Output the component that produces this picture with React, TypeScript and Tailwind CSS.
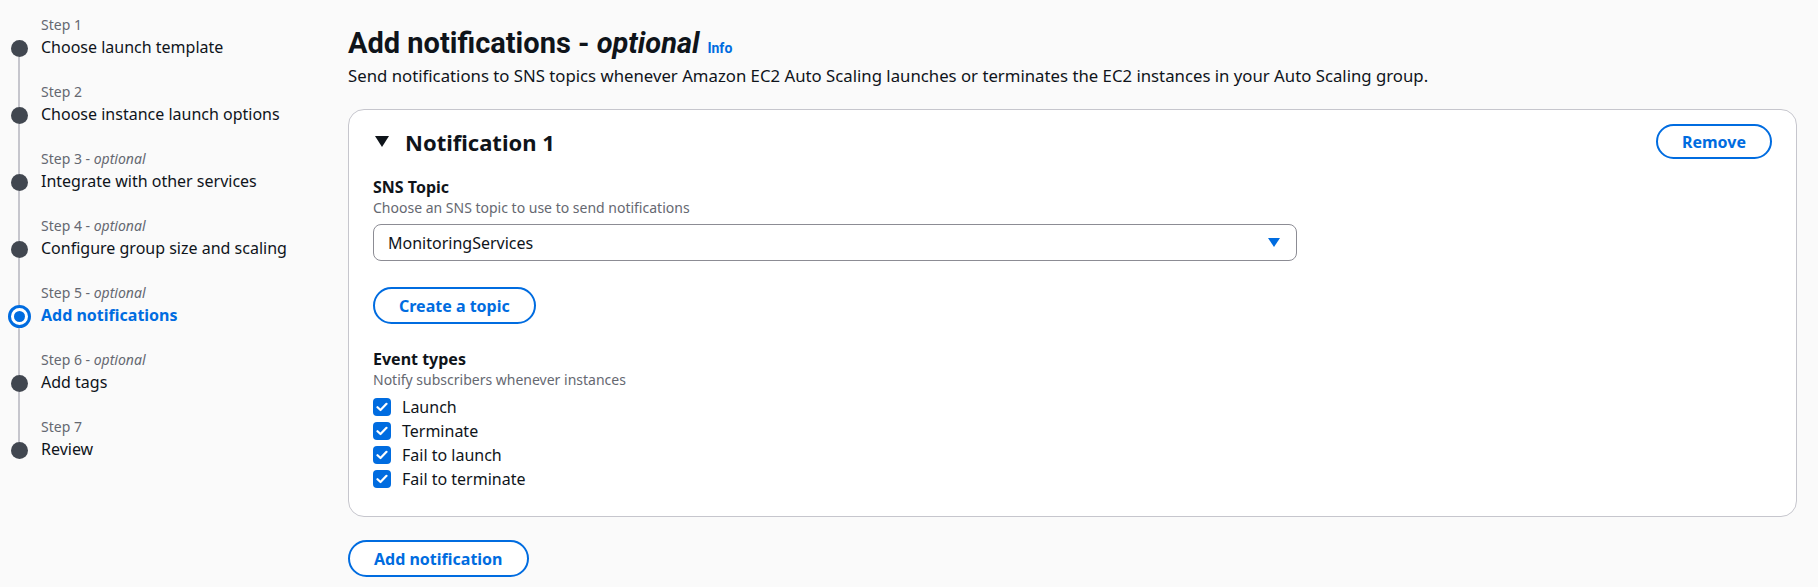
import React from "react";

type Step = {
  n: string;
  label: string;
  optional?: boolean;
  active?: boolean;
};

const STEPS: Step[] = [
  { n: "Step 1", label: "Choose launch template" },
  { n: "Step 2", label: "Choose instance launch options" },
  { n: "Step 3", label: "Integrate with other services", optional: true },
  { n: "Step 4", label: "Configure group size and scaling", optional: true },
  { n: "Step 5", label: "Add notifications", optional: true, active: true },
  { n: "Step 6", label: "Add tags", optional: true },
  { n: "Step 7", label: "Review" },
];

const EVENTS = ["Launch", "Terminate", "Fail to launch", "Fail to terminate"];

function StepItem({ step, first, last }: { step: Step; first: boolean; last: boolean }) {
  return (
    <li className="flex gap-[11px]">
      <div className="flex w-[22px] flex-col items-center">
        <div
          className={`w-[2px] ${step.active ? "h-[23px]" : "h-[26px]"} ${
            first ? "bg-transparent" : "bg-[#c6c6cd]"
          }`}
        />
        {step.active ? (
          <div className="flex h-[23px] w-[23px] items-center justify-center rounded-full border-[3px] border-[#006ce0] bg-white">
            <div className="h-[11px] w-[11px] rounded-full bg-[#006ce0]" />
          </div>
        ) : (
          <div className="h-[17px] w-[17px] rounded-full bg-[#414750]" />
        )}
        <div className={`w-[2px] flex-1 ${last ? "bg-transparent" : "bg-[#c6c6cd]"}`} />
      </div>
      <div className="pb-[22px]">
        <div className="text-[14px] leading-[21px] text-[#656871]">
          {step.n}
          {step.optional && (
            <>
              {" - "}
              <i>optional</i>
            </>
          )}
        </div>
        <div
          className={`text-[16px] leading-[24px] ${
            step.active ? "font-bold text-[#006ce0]" : "text-[#0f141a]"
          }`}
        >
          {step.label}
        </div>
      </div>
    </li>
  );
}

function OutlineButton({ children, h = "h-[37px]" }: { children: React.ReactNode; h?: string }) {
  return (
    <button
      className={`inline-flex ${h} items-center rounded-full border-2 border-[#006ce0] bg-white px-[24px] text-[16px] font-bold text-[#006ce0]`}
    >
      {children}
    </button>
  );
}

function Checkbox({ label }: { label: string }) {
  return (
    <label className="flex h-[24px] items-center gap-[11px]">
      <span className="flex h-[18px] w-[18px] items-center justify-center rounded-[4px] bg-[#006ce0]">
        <svg width="12" height="10" viewBox="0 0 12 10" fill="none">
          <path
            d="M1.5 5.2 L4.5 8 L10.5 1.8"
            stroke="white"
            strokeWidth="2.2"
            strokeLinecap="round"
            strokeLinejoin="round"
          />
        </svg>
      </span>
      <span className="text-[16px] leading-[24px] text-[#0f141a]">{label}</span>
    </label>
  );
}

export default function App() {
  return (
    <div
      className="flex min-h-[587px] bg-[#fafafa] text-[#0f141a]"
      style={{ fontFamily: '"Noto Sans", "Open Sans", sans-serif' }}
    >
      <nav className="w-[348px] shrink-0 pl-[8px] pt-[14px]">
        <ol>
          {STEPS.map((s, i) => (
            <StepItem key={s.n} step={s} first={i === 0} last={i === STEPS.length - 1} />
          ))}
        </ol>
      </nav>

      <main className="flex-1 pr-[21px] pt-[25px]">
        <div className="flex items-baseline gap-[8px]">
          <h1
            className="text-[29px] font-bold leading-[36px] text-[#0f141a]"
            style={{ fontFamily: "Roboto, sans-serif" }}
          >
            Add notifications - <i>optional</i>
          </h1>
          <span
            className="text-[14px] font-bold text-[#006ce0]"
            style={{ fontFamily: "Roboto, sans-serif" }}
          >
            Info
          </span>
        </div>
        <p className="mt-[3px] text-[16.75px] leading-[24px] text-[#0f141a]">
          Send notifications to SNS topics whenever Amazon EC2 Auto Scaling launches or terminates the EC2
          instances in your Auto Scaling group.
        </p>

        <section className="mt-[21px] rounded-[16px] border border-[#c6c6cd] bg-white px-[24px] pb-[25px] pt-[14px]">
          <div className="flex items-center justify-between">
            <div className="flex items-center gap-[16px]">
              <svg width="14" height="11" viewBox="0 0 14 11" className="ml-[2px]">
                <path d="M0 0 H14 L7 11 Z" fill="#0f141a" />
              </svg>
              <h2 className="text-[22px] font-bold leading-[28px]">Notification 1</h2>
            </div>
            <OutlineButton h="h-[35px]">Remove</OutlineButton>
          </div>

          <div className="mt-[17px]">
            <div className="text-[16px] font-bold leading-[22px]">SNS Topic</div>
            <div className="text-[14px] leading-[20px] text-[#656871]">
              Choose an SNS topic to use to send notifications
            </div>
            <div className="mt-[6px] flex h-[37px] w-[924px] items-center justify-between rounded-[8px] border border-[#8c8c94] bg-white pl-[14px] pr-[16px]">
              <span className="text-[16px]">MonitoringServices</span>
              <svg width="12" height="9" viewBox="0 0 12 9">
                <path d="M0 0 H12 L6 9 Z" fill="#006ce0" />
              </svg>
            </div>
          </div>

          <div className="mt-[26px]">
            <OutlineButton>Create a topic</OutlineButton>
          </div>

          <div className="mt-[24px]">
            <div className="text-[16px] font-bold leading-[22px]">Event types</div>
            <div className="text-[14px] leading-[20px] text-[#656871]">Notify subscribers whenever instances</div>
            <div className="mt-[5px] flex flex-col">
              {EVENTS.map((e) => (
                <Checkbox key={e} label={e} />
              ))}
            </div>
          </div>
        </section>

        <div className="mt-[23px]">
          <OutlineButton>Add notification</OutlineButton>
        </div>
      </main>
    </div>
  );
}
